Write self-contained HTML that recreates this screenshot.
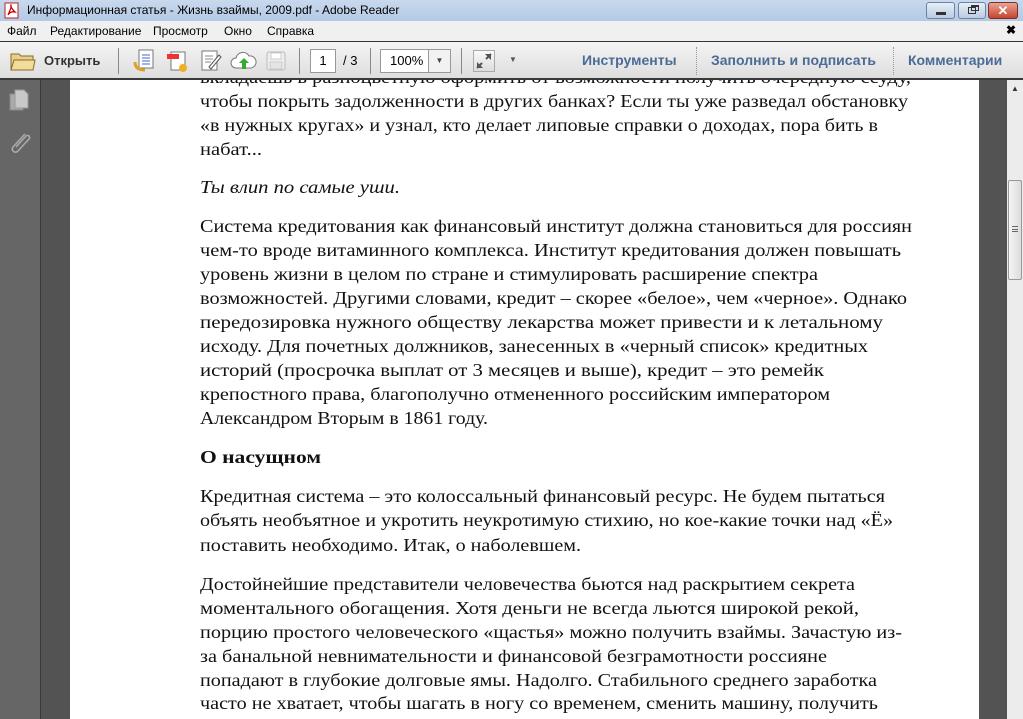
<!DOCTYPE html>
<html><head><meta charset="utf-8"><style>
*{margin:0;padding:0;box-sizing:border-box}
body{width:1023px;height:719px;overflow:hidden;background:#535353;font-family:"Liberation Sans","Noto Sans CJK SC",sans-serif;position:relative}
.abs{position:absolute}
#title{left:0;top:0;width:1023px;height:21px;background:linear-gradient(#c9d9ee,#b4c9e4);font-size:12px;color:#000}
#menu{left:0;top:21px;width:1023px;height:21px;background:#f0f0f0;font-size:12px;border-bottom:1px solid #333}
#tb{left:0;top:42px;width:1023px;height:38px;background:linear-gradient(#f4f4f4,#dedede);border-bottom:2px solid #3a3a3a}
.sep{position:absolute;top:6px;width:1px;height:26px;background:#888}
.blue{position:absolute;top:10px;font-size:14px;font-weight:bold;color:#4a6b96}
#nav{left:0;top:80px;width:41px;height:639px;background:#666;border-right:1px solid #3a3a3a}
#page{left:70px;top:80px;width:909px;height:639px;background:#fff}
#sb{left:1007px;top:80px;width:16px;height:639px;background:#ececec}
</style></head><body>
<div id="title" class="abs">
 <svg class="abs" style="left:4px;top:2px" width="16" height="17"><rect x="1" y="1" width="13" height="15" fill="#fff" stroke="#b22" /><path d="M4 13 Q8 4 7 3 Q6 5 11 10 Q6 9 4 13Z" fill="none" stroke="#c00" stroke-width="1.3"/></svg>
 <div class="abs" style="left:27px;top:3px">Информационная статья - Жизнь взаймы, 2009.pdf - Adobe Reader</div>
 <div class="abs" style="left:926px;top:2px;width:29px;height:17px;border:1px solid #6d83a3;border-radius:3px;background:linear-gradient(#e6eef8,#bccbe0)"><div style="margin:9px auto 0;width:10px;height:3px;background:#333"></div></div>
 <div class="abs" style="left:958px;top:2px;width:28px;height:17px;border:1px solid #6d83a3;border-radius:3px;background:linear-gradient(#e6eef8,#bccbe0)"><div style="position:absolute;left:9px;top:4px;width:8px;height:7px;border:1px solid #333"></div><div style="position:absolute;left:12px;top:2px;width:8px;height:6px;border:1px solid #333;border-top-width:2px"></div></div>
 <div class="abs" style="left:988px;top:2px;width:30px;height:17px;border:1px solid #7a3028;border-radius:3px;background:linear-gradient(#e9a392,#c4452f);color:#fff;font-weight:bold;text-align:center;font-size:13px;line-height:15px">✕</div>
</div>
<div id="menu" class="abs">
 <span class="abs" style="left:7px;top:3px">Файл</span>
 <span class="abs" style="left:50px;top:3px">Редактирование</span>
 <span class="abs" style="left:153px;top:3px">Просмотр</span>
 <span class="abs" style="left:224px;top:3px">Окно</span>
 <span class="abs" style="left:267px;top:3px">Справка</span>
 <span class="abs" style="left:1006px;top:2px;font-weight:bold;font-size:12px">✖</span>
</div>
<div id="tb" class="abs">
 <svg class="abs" style="left:10px;top:8px" width="26" height="22"><path d="M1 4h8l2 2h12v14H1z" fill="#e8cf8a" stroke="#8a6a2a"/><path d="M1 20l3-10h21l-2 10z" fill="#f2dc9c" stroke="#8a6a2a"/></svg>
 <div class="abs" style="left:44px;top:11px;font-size:13px;font-weight:bold;color:#333">Открыть</div>
 <div class="sep" style="left:118px"></div>
 <svg class="abs" style="left:132px;top:6px" width="24" height="26"><rect x="7" y="2" width="14" height="18" fill="#fff" stroke="#777"/><path d="M10 7h8M10 10h8M10 13h8M10 16h8" stroke="#46c"/><path d="M3 14q0 8 10 8" stroke="#e0a020" stroke-width="3" fill="none"/></svg>
 <svg class="abs" style="left:165px;top:6px" width="24" height="26"><rect x="6" y="4" width="14" height="18" fill="#fff" stroke="#777"/><rect x="2" y="6" width="12" height="5" fill="#e33"/><circle cx="18" cy="20" r="4" fill="#f0b020"/></svg>
 <svg class="abs" style="left:199px;top:6px" width="24" height="26"><rect x="3" y="3" width="15" height="19" fill="#fff" stroke="#777"/><path d="M6 8h8M6 11h8M6 14h6" stroke="#888"/><path d="M10 19l10-12 2 2-10 12z" fill="#fff" stroke="#555"/></svg>
 <svg class="abs" style="left:230px;top:8px" width="28" height="22"><path d="M6 18a5 5 0 010-10 7 7 0 0113-2 5 5 0 012 12z" fill="#fff" stroke="#777"/><path d="M14 8l-5 5h3v6h4v-6h3z" fill="#3a3"/></svg>
 <svg class="abs" style="left:265px;top:8px" width="22" height="22"><rect x="2" y="2" width="18" height="18" rx="2" fill="#eee" stroke="#bbb"/><rect x="6" y="3" width="10" height="6" fill="#fff" stroke="#ccc"/><rect x="5" y="12" width="12" height="7" fill="#e4e4e4" stroke="#ccc"/></svg>
 <div class="sep" style="left:299px"></div>
 <div class="abs" style="left:310px;top:7px;width:26px;height:24px;background:#fff;border:1px solid #999;font-size:13px;text-align:center;line-height:22px">1</div>
 <div class="abs" style="left:343px;top:11px;font-size:13px">/ 3</div>
 <div class="sep" style="left:370px"></div>
 <div class="abs" style="left:380px;top:7px;width:71px;height:24px;background:#fff;border:1px solid #999;font-size:13px;line-height:22px;padding-left:9px">100%<div style="position:absolute;right:0;top:0;width:22px;height:22px;border-left:1px solid #999;background:#f2f2f2;font-size:8px;text-align:center;line-height:22px;color:#444">▼</div></div>
 <div class="sep" style="left:461px"></div>
 <div class="abs" style="left:473px;top:8px;width:22px;height:22px;border:1px solid #aaa;background:linear-gradient(#fafafa,#ddd)"><svg width="20" height="20"><path d="M3 17l5-5M17 3l-5 5" stroke="#555" stroke-width="2"/><path d="M3 17v-6l6 6zM17 3v6l-6-6z" fill="#555"/></svg></div>
 <div class="abs" style="left:509px;top:13px;font-size:8px;color:#555">▼</div>
 <div class="blue" style="left:582px">Инструменты</div>
 <div class="abs" style="left:696px;top:5px;height:28px;border-left:1px dotted #999"></div>
 <div class="blue" style="left:711px">Заполнить и подписать</div>
 <div class="abs" style="left:893px;top:5px;height:28px;border-left:1px dotted #999"></div>
 <div class="blue" style="left:908px">Комментарии</div>
</div>
<div id="nav" class="abs">
 <svg class="abs" style="left:8px;top:8px" width="24" height="26"><rect x="2" y="6" width="13" height="16" fill="#aaa" stroke="#888"/><path d="M7 2h9l4 4v14H7z" fill="#c8c8c8" stroke="#999"/></svg>
 <svg class="abs" style="left:7px;top:50px" width="26" height="26"><path d="M18 4L6 17a3 3 0 005 4l11-12a2 2 0 00-3-3L9 17" fill="none" stroke="#aaa" stroke-width="1.6"/></svg>
</div>
<div id="page" class="abs"></div>
<div id="sb" class="abs">
 <div class="abs" style="left:4px;top:4px;font-size:8px;color:#333">▲</div>
 <div class="abs" style="left:1px;top:100px;width:14px;height:100px;border:1px solid #999;border-radius:2px;background:linear-gradient(90deg,#f4f4f4,#dcdcdc)"><div style="position:absolute;left:3px;top:45px;width:6px;height:6px;border-top:1px solid #666;border-bottom:1px solid #666"></div><div style="position:absolute;left:3px;top:48px;width:6px;height:1px;background:#666"></div></div>
</div>
<div class="abs" style="left:0;top:80px;width:1000px;height:639px;overflow:hidden">
<svg class="abs" style="left:0;top:-80px" width="1000" height="719" font-family="'Liberation Serif','DejaVu Serif',serif" font-size="18" fill="#111">
<text x="200" y="83" textLength="711" lengthAdjust="spacingAndGlyphs">вкладаешь в разноцветную оформить от возможности получить очередную ссуду,</text>
<text x="200" y="107" textLength="708" lengthAdjust="spacingAndGlyphs">чтобы покрыть задолженности в других банках? Если ты уже разведал обстановку</text>
<text x="200" y="131" textLength="678" lengthAdjust="spacingAndGlyphs">«в нужных кругах» и узнал, кто делает липовые справки о доходах, пора бить в</text>
<text x="200" y="155" textLength="62" lengthAdjust="spacingAndGlyphs">набат...</text>
<text x="200" y="193" textLength="200" lengthAdjust="spacingAndGlyphs" font-style="italic">Ты влип по самые уши.</text>
<text x="200" y="232" textLength="712" lengthAdjust="spacingAndGlyphs">Система кредитования как финансовый институт должна становиться для россиян</text>
<text x="200" y="256" textLength="701" lengthAdjust="spacingAndGlyphs">чем-то вроде витаминного комплекса. Институт кредитования должен повышать</text>
<text x="200" y="280" textLength="618" lengthAdjust="spacingAndGlyphs">уровень жизни в целом по стране и стимулировать расширение спектра</text>
<text x="200" y="304" textLength="707" lengthAdjust="spacingAndGlyphs">возможностей. Другими словами, кредит – скорее «белое», чем «черное». Однако</text>
<text x="200" y="328" textLength="683" lengthAdjust="spacingAndGlyphs">передозировка нужного обществу лекарства может привести и к летальному</text>
<text x="200" y="352" textLength="668" lengthAdjust="spacingAndGlyphs">исходу. Для почетных должников, занесенных в «черный список» кредитных</text>
<text x="200" y="376" textLength="624" lengthAdjust="spacingAndGlyphs">историй (просрочка выплат от 3 месяцев и выше), кредит – это ремейк</text>
<text x="200" y="400" textLength="630" lengthAdjust="spacingAndGlyphs">крепостного права, благополучно отмененного российским императором</text>
<text x="200" y="424" textLength="288" lengthAdjust="spacingAndGlyphs">Александром Вторым в 1861 году.</text>
<text x="200" y="463" textLength="121" lengthAdjust="spacingAndGlyphs" font-weight="bold">О насущном</text>
<text x="200" y="502" textLength="685" lengthAdjust="spacingAndGlyphs">Кредитная система – это колоссальный финансовый ресурс. Не будем пытаться</text>
<text x="200" y="526" textLength="693" lengthAdjust="spacingAndGlyphs">объять необъятное и укротить неукротимую стихию, но кое-какие точки над «Ё»</text>
<text x="200" y="551" textLength="381" lengthAdjust="spacingAndGlyphs">поставить необходимо. Итак, о наболевшем.</text>
<text x="200" y="590" textLength="655" lengthAdjust="spacingAndGlyphs">Достойнейшие представители человечества бьются над раскрытием секрета</text>
<text x="200" y="614" textLength="659" lengthAdjust="spacingAndGlyphs">моментального обогащения. Хотя деньги не всегда льются широкой рекой,</text>
<text x="200" y="638" textLength="702" lengthAdjust="spacingAndGlyphs">порцию простого человеческого «щастья» можно получить взаймы. Зачастую из-</text>
<text x="200" y="662" textLength="627" lengthAdjust="spacingAndGlyphs">за банальной невнимательности и финансовой безграмотности россияне</text>
<text x="200" y="686" textLength="677" lengthAdjust="spacingAndGlyphs">попадают в глубокие долговые ямы. Надолго. Стабильного среднего заработка</text>
<text x="200" y="709" textLength="678" lengthAdjust="spacingAndGlyphs">часто не хватает, чтобы шагать в ногу со временем, сменить машину, получить</text>
</svg>
</div>
</body></html>
